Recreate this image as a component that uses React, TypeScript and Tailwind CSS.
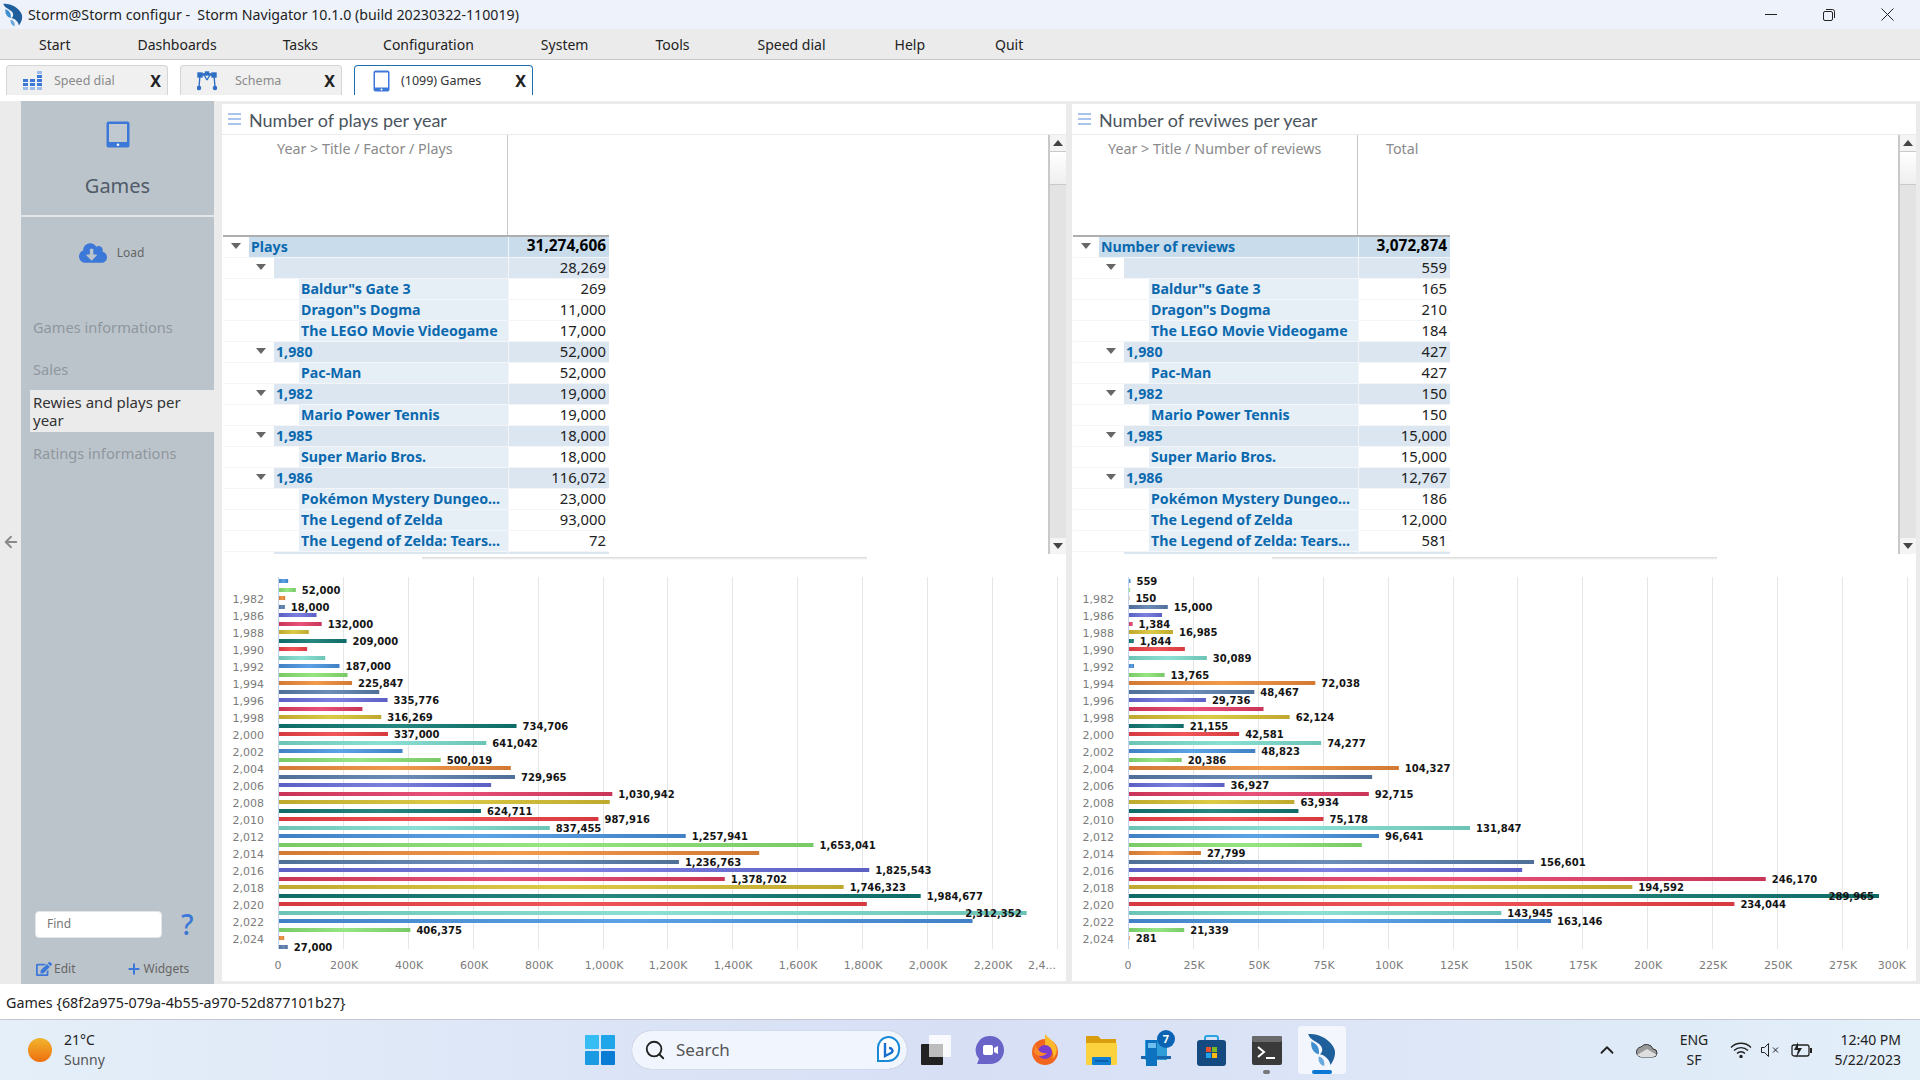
import { ArrowLeft, ChevronUp, Plus, Search } from 'lucide-react';
import { FaCloudDownloadAlt, FaEdit } from 'react-icons/fa';

type Row = { level: 0 | 1 | 2; name: string; value: string };

const playsRows: Row[] = [
  { level: 0, name: 'Plays', value: '31,274,606' },
  { level: 1, name: '', value: '28,269' },
  { level: 2, name: 'Baldur"s Gate 3', value: '269' },
  { level: 2, name: 'Dragon"s Dogma', value: '11,000' },
  { level: 2, name: 'The LEGO Movie Videogame', value: '17,000' },
  { level: 1, name: '1,980', value: '52,000' },
  { level: 2, name: 'Pac-Man', value: '52,000' },
  { level: 1, name: '1,982', value: '19,000' },
  { level: 2, name: 'Mario Power Tennis', value: '19,000' },
  { level: 1, name: '1,985', value: '18,000' },
  { level: 2, name: 'Super Mario Bros.', value: '18,000' },
  { level: 1, name: '1,986', value: '116,072' },
  { level: 2, name: 'Pokémon Mystery Dungeo...', value: '23,000' },
  { level: 2, name: 'The Legend of Zelda', value: '93,000' },
  { level: 2, name: 'The Legend of Zelda: Tears...', value: '72' },
  { level: 1, name: '', value: '' },
];

const reviewRows: Row[] = [
  { level: 0, name: 'Number of reviews', value: '3,072,874' },
  { level: 1, name: '', value: '559' },
  { level: 2, name: 'Baldur"s Gate 3', value: '165' },
  { level: 2, name: 'Dragon"s Dogma', value: '210' },
  { level: 2, name: 'The LEGO Movie Videogame', value: '184' },
  { level: 1, name: '1,980', value: '427' },
  { level: 2, name: 'Pac-Man', value: '427' },
  { level: 1, name: '1,982', value: '150' },
  { level: 2, name: 'Mario Power Tennis', value: '150' },
  { level: 1, name: '1,985', value: '15,000' },
  { level: 2, name: 'Super Mario Bros.', value: '15,000' },
  { level: 1, name: '1,986', value: '12,767' },
  { level: 2, name: 'Pokémon Mystery Dungeo...', value: '186' },
  { level: 2, name: 'The Legend of Zelda', value: '12,000' },
  { level: 2, name: 'The Legend of Zelda: Tears...', value: '581' },
  { level: 1, name: '', value: '' },
];

// [value, show label]
const playsBars: [number, boolean][] = [
  [28269, false], [52000, true], [19000, false], [18000, true], [116072, false], [132000, true], [92000, false], [209000, true], [87000, false], [143000, false],
  [187000, true], [212000, false], [225847, true], [310000, false], [335776, true], [258000, false], [316269, true], [734706, true], [337000, true], [641042, true],
  [382000, false], [500019, true], [717000, false], [729965, true], [656000, false], [1030942, true], [1023000, false], [624711, true], [987916, true], [837455, true],
  [1257941, true], [1653041, true], [1485000, false], [1236763, true], [1825543, true], [1378702, true], [1746323, true], [1984677, true], [1818000, false], [2312352, true],
  [2145000, false], [406375, true], [16000, false], [27000, true],
];

const reviewBars: [number, boolean][] = [
  [559, true], [427, false], [150, true], [15000, true], [12767, false], [1384, true], [16985, true], [1844, true], [21600, false], [30089, true],
  [1930, false], [13765, true], [72038, true], [48467, true], [29736, true], [52000, false], [62124, true], [21155, true], [42581, true], [74277, true],
  [48823, true], [20386, true], [104327, true], [94000, false], [36927, true], [92715, true], [63934, true], [65500, false], [75178, true], [131847, true],
  [96641, true], [90000, false], [27799, true], [156601, true], [152000, false], [246170, true], [194592, true], [289965, true], [234044, true], [143945, true],
  [163146, true], [21339, true], [281, true], [0, false],
];

const barColors = [
  ['#4180c4', '#5ba3e6'],
  ['#78c968', '#95e585'],
  ['#d27a34', '#f09a4c'],
  ['#4f6f98', '#6a8db8'],
  ['#5c60c4', '#7b80e0'],
  ['#c93558', '#e8527a'],
  ['#bfa92e', '#ddca46'],
  ['#0f6b66', '#26877f'],
  ['#d63a40', '#f05558'],
  ['#6cc4b6', '#8ae0d4'],
];

const yearLabels = ['1,982', '1,986', '1,988', '1,990', '1,992', '1,994', '1,996', '1,998', '2,000', '2,002', '2,004', '2,006', '2,008', '2,010', '2,012', '2,014', '2,016', '2,018', '2,020', '2,022', '2,024'];

const playTicks = ['0', '200K', '400K', '600K', '800K', '1,000K', '1,200K', '1,400K', '1,600K', '1,800K', '2,000K', '2,200K', '2,4...'];
const reviewTicks = ['0', '25K', '50K', '75K', '100K', '125K', '150K', '175K', '200K', '225K', '250K', '275K', '300K'];

function BarChart({ id, bars, max, ticks }: { id: string; bars: [number, boolean][]; max: number; ticks: string[] }) {
  const originX = 56;
  const step = 64.9;
  const plotW = 776;
  return (
    <svg width="844" height="421" className="block font-['DejaVu_Sans',sans-serif]">
      <defs>
        {barColors.map((c, i) => (
          <linearGradient key={i} id={`${id}-${i}`} x1="0" x2="1" y1="0" y2="0">
            <stop offset="0" stopColor={c[0]} />
            <stop offset="0.5" stopColor={c[1]} />
            <stop offset="1" stopColor={c[0]} />
          </linearGradient>
        ))}
      </defs>
      {ticks.map((t, i) => {
        const x = Math.round(originX + step * i);
        return (
          <g key={t}>
            {i > 0 && <line x1={x + 0.5} x2={x + 0.5} y1="17" y2="389" stroke="#e6e6e6" />}
            <text
              x={i === 12 ? x - 1 : x + (i === 0 ? 0 : 1)}
              y="409"
              textAnchor={i === 12 ? 'end' : 'middle'}
              fontSize="11"
              fill="#7c7c7c"
            >
              {t}
            </text>
          </g>
        );
      })}
      <line x1={originX + 0.5} x2={originX + 0.5} y1="17" y2="389" stroke="#c5d3ea" />
      {yearLabels.map((y, i) => (
        <text key={y} x="42" y={43 + i * 17} textAnchor="end" fontSize="11" fill="#7c7c7c">
          {y}
        </text>
      ))}
      {bars.map(([value, showLabel], i) => {
        const w = (value / max) * plotW;
        const cy = Math.round(21 + i * 8.5);
        const inside = value === 2312352 || value === 289965;
        const labelX = inside ? originX + w - 4 : originX + w + 7;
        return (
          <g key={i}>
            <rect x={originX + 1} y={cy - 2} width={w} height="4" fill={`url(#${id}-${i % 10})`} />
            {showLabel && (
              <text
                x={labelX}
                y={cy + 4}
                textAnchor={inside ? 'end' : 'start'}
                fontSize="10"
                fontWeight="700"
                fill="#141414"
              >
                {value.toLocaleString('en-US')}
              </text>
            )}
          </g>
        );
      })}
    </svg>
  );
}

function TableRow({ row, valueW, offsets }: { row: Row; valueW: string; offsets: [number, number, number] }) {
  const indent = offsets[row.level];
  const nameBg = row.level === 0 ? 'bg-[#c9dcec]' : row.level === 1 ? 'bg-[#dbe6f1]' : 'bg-[#e6eef6]';
  const valueBg = row.level === 0 ? 'bg-[#c9dcec] text-[15.4px] font-bold text-black' : row.level === 1 ? 'bg-[#dbe6f1] text-[14.8px] text-[#222]' : 'bg-white text-[14.8px] text-[#222]';
  return (
    <div className="flex h-[21px] shrink-0 leading-[20px]">
      <div className="flex w-[285px] shrink-0 border-b border-[#f3f5f8] text-[14.2px]">
        <div className="relative shrink-0" style={{ width: indent }}>
          {row.level < 2 && (
            <span className="absolute right-[8px] top-[6px] h-0 w-0 border-x-[5px] border-t-[6px] border-x-transparent border-t-[#666]" />
          )}
        </div>
        <div className={`flex-1 truncate pl-[2px] font-bold text-[#0a69ae] ${nameBg}`}>{row.name}</div>
      </div>
      <div className={`${valueW} shrink-0 border-b border-l border-[#f3f5f8] pr-[3px] text-right leading-[18px] ${valueBg}`}>{row.value}</div>
    </div>
  );
}

function ScrollBar() {
  return (
    <div className="flex w-[18px] shrink-0 flex-col border-l-2 border-[#c9c9c9] bg-[#e3e3e3]">
      <div className="flex h-[17px] items-center justify-center border-b border-[#c9c9c9] bg-[#f4f4f4]">
        <span className="h-0 w-0 border-x-[5px] border-b-[6px] border-x-transparent border-b-[#444]" />
      </div>
      <div className="h-[33px] border-b border-[#c9c9c9] bg-gradient-to-b from-white to-[#efefef]" />
      <div className="flex-1" />
      <div className="flex h-[16px] items-center justify-center bg-[#f4f4f4]">
        <span className="h-0 w-0 border-x-[5px] border-t-[6px] border-x-transparent border-t-[#444]" />
      </div>
    </div>
  );
}

function Panel({
  title,
  header,
  total,
  rows,
  valueW,
  offsets,
  headerPad,
  children,
}: {
  title: string;
  header: string;
  total?: string;
  rows: Row[];
  valueW: string;
  offsets: [number, number, number];
  headerPad: string;
  children: React.ReactNode;
}) {
  return (
    <section className="flex w-[844px] shrink-0 flex-col bg-white">
      <div className="flex h-[31px] shrink-0 items-center gap-[8px] border-b border-[#ebebeb] pl-[6px] text-[#4a5560]">
        <div className="flex w-[13px] flex-col gap-[3px]">
          <span className="h-[2px] bg-[#a9c5ee]" />
          <span className="h-[2px] bg-[#a9c5ee]" />
          <span className="h-[2px] bg-[#a9c5ee]" />
        </div>
        <span className="pt-[2px] font-['Lato',sans-serif] text-[18px]">{title}</span>
      </div>
      <div className="flex h-[419px] shrink-0 overflow-hidden">
        <div className="flex-1 pl-[1px]">
          <div className="flex h-[100px]">
            <div className={`w-[285px] border-r border-[#c8c8c8] pt-[3px] text-[14.3px] text-[#8a8a8a] ${headerPad}`}>{header}</div>
            {total && <div className="pl-[28px] pt-[3px] text-[14.3px] text-[#8a8a8a]">{total}</div>}
          </div>
          <div className={`border-t-2 border-[#aeaeae] ${total ? 'w-[377px]' : 'w-[386px]'}`}>
            {rows.map((r, i) => (
              <TableRow key={i} row={r} valueW={valueW} offsets={offsets} />
            ))}
          </div>
        </div>
        <ScrollBar />
      </div>
      <div className="h-[6px] shrink-0 pt-[3px]">
        <div className="ml-[200px] h-[3px] w-[445px] bg-gradient-to-b from-[#d8d8d8] to-white" />
      </div>
      {children}
    </section>
  );
}

function StormLogo({ size }: { size: number }) {
  return (
    <svg width={size} height={size} viewBox="0 0 32 32">
      <path d="M3 1C12 0 25 6 28 16c1 5-1 10-4 14-1-5-5-9-10-10 3-2 3-6 0-9C11 8 5 7 3 1z" fill="#1f5f9c" />
      <path d="M6 8c5 2 8 6 7 12-5-1-8-6-7-12z" fill="#3f8fd0" />
      <path d="M13 22c4 1 6 5 5 9-4-1-6-5-5-9z" fill="#6aa9dc" />
    </svg>
  );
}

function TabIcon() {
  return (
    <svg width="17" height="22" viewBox="0 0 17 22">
      <rect x="0.5" y="0.5" width="16" height="21" rx="2" fill="#3c78d8" />
      <rect x="2" y="2.5" width="13" height="15" fill="#fff" />
      <circle cx="8.5" cy="19.6" r="1" fill="#fff" />
    </svg>
  );
}

export default function App() {
  return (
    <div className="flex h-screen w-[1920px] flex-col overflow-hidden bg-white font-['Noto_Sans',sans-serif] text-[#222]">
      {/* title bar */}
      <div className="flex h-[29px] shrink-0 items-center bg-[#eef3fb] pl-[1px] text-[14.2px]">
        <StormLogo size={24} />
        <span className="ml-[3px] whitespace-pre text-[#222]">Storm@Storm configur -  Storm Navigator 10.1.0 (build 20230322-110019)</span>
        <div className="ml-auto flex items-center gap-[46px] pr-[26px]">
          <span className="h-px w-[12px] bg-[#222]" />
          <svg width="12" height="12" viewBox="0 0 12 12" fill="none" stroke="#222">
            <rect x="0.5" y="2.5" width="9" height="9" rx="1.5" />
            <path d="M3 .5h6.5a2 2 0 0 1 2 2V9" />
          </svg>
          <svg width="13" height="13" viewBox="0 0 13 13" stroke="#222">
            <path d="M.5.5l12 12M12.5.5l-12 12" />
          </svg>
        </div>
      </div>

      {/* menu */}
      <div className="flex h-[31px] shrink-0 items-center border-b border-[#c8c8c8] bg-[#ebebeb] text-[14px]">
        <span className="ml-[39px]">Start</span>
        <span className="ml-[67px]">Dashboards</span>
        <span className="ml-[66px]">Tasks</span>
        <span className="ml-[65px]">Configuration</span>
        <span className="ml-[67px]">System</span>
        <span className="ml-[67px]">Tools</span>
        <span className="ml-[68px]">Speed dial</span>
        <span className="ml-[69px]">Help</span>
        <span className="ml-[70px]">Quit</span>
      </div>

      {/* tabs */}
      <div className="flex h-[41px] shrink-0 gap-[12px] pl-[6px] pt-[5px] text-[12.5px]">
        <div className="flex h-[30px] w-[162px] items-center rounded-t-[4px] border-x border-t border-[#d5d5d5] bg-[#f0f0f0] pl-[16px] pr-[6px] text-[#8a8a8a]">
          <svg width="20" height="20" viewBox="0 0 20 20" fill="#3c78d8">
            <rect x="0" y="8" width="5" height="3" />
            <rect x="7" y="8" width="5" height="3" />
            <rect x="14" y="4" width="5" height="3" />
            <rect x="14" y="8" width="5" height="3" />
            <rect x="0" y="12" width="5" height="3" />
            <rect x="7" y="12" width="5" height="3" />
            <rect x="14" y="12" width="5" height="3" />
            <rect x="0" y="16" width="5" height="3" fill="#9dbcec" />
            <rect x="7" y="16" width="5" height="3" fill="#9dbcec" />
            <rect x="14" y="16" width="5" height="3" fill="#9dbcec" />
            <rect x="14" y="0" width="5" height="3" fill="#9dbcec" />
          </svg>
          <span className="ml-[11px] pt-[2px]">Speed dial</span>
          <span className="ml-auto text-[16px] font-bold leading-none text-[#222]">X</span>
        </div>
        <div className="flex h-[30px] w-[162px] items-center rounded-t-[4px] border-x border-t border-[#d5d5d5] bg-[#f0f0f0] pl-[16px] pr-[6px] text-[#8a8a8a]">
          <svg width="20" height="20" viewBox="0 0 20 20" fill="none" stroke="#2f6fc4" strokeWidth="1.4">
            <path d="M3 4C5 2 15 2 17 4M3 4l-1 12M17 4l1 12M8 4l-5 0M12 4h5M7 4l3 5M13 4l-3 5" />
            <rect x="1" y="2" width="4" height="4" fill="#2f6fc4" />
            <rect x="15" y="2" width="4" height="4" fill="#2f6fc4" />
            <rect x="8.5" y="1" width="3" height="3" fill="#2f6fc4" />
            <circle cx="2" cy="17" r="1.6" fill="#2f6fc4" />
            <circle cx="18" cy="17" r="1.6" fill="#2f6fc4" />
          </svg>
          <span className="ml-[18px] pt-[2px]">Schema</span>
          <span className="ml-auto text-[16px] font-bold leading-none text-[#222]">X</span>
        </div>
        <div className="flex h-[30px] w-[179px] items-center rounded-t-[4px] border-x border-t border-[#1f6fb0] bg-white pl-[18px] pr-[6px] text-[#333]">
          <TabIcon />
          <span className="ml-[11px] pt-[2px]">(1099) Games</span>
          <span className="ml-auto text-[16px] font-bold leading-none text-[#222]">X</span>
        </div>
      </div>

      {/* main */}
      <div className="flex h-[883px] shrink-0 bg-[#ebebeb]">
        <div className="flex w-[21px] shrink-0 items-center justify-center">
          <ArrowLeft size={18} className="mt-[-2px] text-[#8a8a8a]" strokeWidth={2.5} />
        </div>

        <aside className="flex w-[193px] shrink-0 flex-col bg-[#bcc4cb] text-[14.6px] text-[#8f979e]">
          <div className="flex h-[116px] flex-col items-center border-b-2 border-[#e3e5e7] pt-[20px]">
            <svg width="24" height="27" viewBox="0 0 24 27">
              <rect x="0.5" y="0.5" width="23" height="26" rx="2" fill="#3c78d8" />
              <rect x="3" y="3" width="18" height="18" fill="#c1c9d0" />
              <circle cx="12" cy="23.7" r="1.3" fill="#fff" />
            </svg>
            <span className="mt-[25px] text-[20px] leading-[26px] text-[#4f5b68]">Games</span>
          </div>
          <div className="mt-[22px] flex items-center justify-center pr-[12px]">
            <FaCloudDownloadAlt size={28} className="text-[#3c78d8]" />
            <span className="ml-[10px] text-[12px] text-[#666]">Load</span>
          </div>
          <div className="mt-[50px] pl-[12px] leading-[20px]">Games informations</div>
          <div className="mt-[22px] pl-[12px] leading-[20px]">Sales</div>
          <div className="ml-[9px] mt-[11px] h-[42px] bg-[#ebebeb] pl-[3px] pt-[3px] text-[15px] leading-[18px] text-[#333]">
            Rewies and plays per
            <br />
            year
          </div>
          <div className="mt-[11px] pl-[12px] leading-[20px]">Ratings informations</div>
          <div className="mt-auto flex items-center pl-[14px]">
            <div className="flex h-[27px] w-[127px] items-center rounded-[4px] border border-[#e3e5e7] bg-white pl-[11px] text-[12px] text-[#777]">Find</div>
            <span className="ml-[19px] text-[28px] font-medium leading-none text-[#3c78d8]">?</span>
          </div>
          <div className="mb-[5px] mt-[21px] flex h-[20px] items-center pl-[15px] text-[12px] text-[#666]">
            <FaEdit size={16} className="text-[#3c78d8]" />
            <span className="ml-[2px]">Edit</span>
            <Plus size={16} strokeWidth={3} className="ml-[51px] text-[#3c78d8]" />
            <span className="ml-[1px]">Widgets</span>
          </div>
        </aside>

        <div className="flex flex-1 gap-[6px] pl-[8px] pt-[3px]">
          <div className="h-[877px]">
            <Panel title="Number of plays per year" header="Year > Title / Factor / Plays" headerPad="pl-[54px]" rows={playsRows} valueW="w-[101px]" offsets={[26, 51, 76]}>
              <BarChart id="plays" bars={playsBars} max={2400000} ticks={playTicks} />
            </Panel>
          </div>
          <div className="h-[877px]">
            <Panel title="Number of reviwes per year" header="Year > Title / Number of reviews" headerPad="pl-[35px]" total="Total" rows={reviewRows} valueW="w-[92px]" offsets={[26, 51, 76]}>
              <BarChart id="reviews" bars={reviewBars} max={300000} ticks={reviewTicks} />
            </Panel>
          </div>
        </div>
      </div>

      {/* status */}
      <div className="flex h-[36px] shrink-0 items-center border-b border-[#c3c8d0] pl-[6px] pt-[2px] text-[14.3px]">
        Games {'{'}68f2a975-079a-4b55-a970-52d877101b27{'}'}
      </div>

      {/* taskbar */}
      <div className="flex h-[60px] shrink-0 items-center bg-gradient-to-r from-[#e4eff9] via-[#d7dff5] to-[#e3eff9] text-[14px]">
        <span className="ml-[28px] h-[24px] w-[24px] rounded-full bg-gradient-to-b from-[#efb52e] to-[#ee6d0c]" />
        <div className="ml-[12px] w-[60px] text-[14px] leading-[20px]">
          <div>21°C</div>
          <div className="text-[#555]">Sunny</div>
        </div>
        <svg className="ml-[461px]" width="30" height="30" viewBox="0 0 30 30">
          <rect x="0" y="0" width="14" height="14" rx="1" fill="#36bdf4" />
          <rect x="16" y="0" width="14" height="14" rx="1" fill="#1ea5ea" />
          <rect x="0" y="16" width="14" height="14" rx="1" fill="#1a9ae3" />
          <rect x="16" y="16" width="14" height="14" rx="1" fill="#0a7cd6" />
        </svg>
        <div className="ml-[17px] flex h-[38px] w-[275px] items-center rounded-full bg-[#f1f6fe] pl-[12px] shadow-[0_0_1px_#99a]">
          <Search size={22} className="text-[#222]" />
          <span className="ml-[10px] text-[17px] text-[#555]">Search</span>
          <svg className="ml-auto mr-[6px]" width="26" height="30" viewBox="0 0 26 30" fill="none">
            <path d="M13 2a11 11 0 0 1 11 13c0 6-5 11-11 11H3V14A11 11 0 0 1 13 2z" stroke="#1a8ad8" strokeWidth="2" fill="#fff" />
            <path d="M10 8v13l6-3c3-2 1-5-2-5" stroke="#1a6fd0" strokeWidth="2.4" />
          </svg>
        </div>
        <svg className="ml-[14px]" width="30" height="30" viewBox="0 0 30 30">
          <rect x="0" y="9" width="22" height="21" rx="1" fill="#222" />
          <rect x="8" y="0" width="22" height="22" rx="1" fill="#fff" fillOpacity="0.85" />
          <rect x="8" y="9" width="14" height="13" fill="#bdbdbd" />
        </svg>
        <svg className="ml-[24px]" width="30" height="30" viewBox="0 0 30 30">
          <path d="M15 1c8 0 14 6 14 14s-6 14-14 14H2l2-5A14 14 0 0 1 15 1z" fill="#6a63c8" />
          <rect x="8" y="10" width="10" height="10" rx="2" fill="#fff" />
          <path d="M19 13l4-2v8l-4-2z" fill="#fff" />
        </svg>
        <svg className="ml-[25px]" width="30" height="32" viewBox="0 0 30 32">
          <circle cx="15" cy="18" r="13" fill="#f2651f" />
          <path d="M15 0c3 4 8 6 11 12 2 5 0 10-4 13 3-5 0-12-7-13z" fill="#fcb72a" />
          <circle cx="15" cy="18" r="7" fill="#7a3ccc" />
          <path d="M5 10c2 6 6 10 12 9-3 4-10 4-13-1z" fill="#f98a2a" />
        </svg>
        <svg className="ml-[26px]" width="31" height="30" viewBox="0 0 31 30">
          <path d="M0 2a1 1 0 0 1 1-1h11l3 3h15v6H0z" fill="#d99e0e" />
          <rect x="0" y="8" width="31" height="22" rx="1" fill="#fcd33f" />
          <rect x="6" y="22" width="19" height="8" rx="1" fill="#0f7fd4" />
          <rect x="9" y="25" width="13" height="2" fill="#0a5fa6" />
        </svg>
        <div className="relative ml-[24px] h-[32px] w-[30px]">
          <svg width="30" height="32" viewBox="0 0 30 32">
            <rect x="4" y="6" width="22" height="20" fill="#2f9ed8" />
            <rect x="0" y="22" width="30" height="3" fill="#1766ae" />
            <rect x="5" y="6" width="11" height="26" fill="#0d72c0" />
            <rect x="7" y="9" width="8" height="5" fill="#6dc0ee" />
          </svg>
          <span className="absolute -right-[4px] -top-[4px] flex h-[18px] w-[18px] items-center justify-center rounded-full bg-[#0a63b3] text-[11px] font-bold text-white">7</span>
        </div>
        <svg className="ml-[26px]" width="29" height="31" viewBox="0 0 29 31">
          <path d="M8 6V3a2 2 0 0 1 2-2h9a2 2 0 0 1 2 2v3" fill="none" stroke="#2aa4e0" strokeWidth="2" />
          <rect x="0" y="5" width="29" height="26" rx="3" fill="#144a80" />
          <rect x="9" y="12" width="5" height="5" fill="#e8532e" />
          <rect x="15" y="12" width="5" height="5" fill="#7fba21" />
          <rect x="9" y="18" width="5" height="5" fill="#1fa5ea" />
          <rect x="15" y="18" width="5" height="5" fill="#fdb812" />
        </svg>
        <div className="relative ml-[26px] h-[29px] w-[30px]">
          <svg width="30" height="29" viewBox="0 0 30 29">
            <rect width="30" height="29" rx="2" fill="#3a3a3a" />
            <rect width="30" height="6" rx="2" fill="#6a6a6a" />
            <path d="M6 11l6 5-6 5" fill="none" stroke="#fff" strokeWidth="2" />
            <path d="M14 22h9" stroke="#fff" strokeWidth="2" />
          </svg>
          <span className="absolute -bottom-[9px] left-[11px] h-[4px] w-[7px] rounded-full bg-[#777]" />
        </div>
        <div className="relative ml-[16px] flex h-[48px] w-[48px] items-center justify-center rounded-[4px] bg-[#f3f6fc]">
          <StormLogo size={34} />
          <span className="absolute bottom-[0px] left-[14px] h-[4px] w-[20px] rounded-full bg-[#0a78d4]" />
        </div>
        <ChevronUp size={22} className="ml-[250px] text-[#222]" />
        <svg className="ml-[18px]" width="22" height="16" viewBox="0 0 22 16">
          <path d="M6 15a5 5 0 0 1-1-10 7 7 0 0 1 12 2 4 4 0 0 1 0 8z" fill="#9a9a9a" stroke="#333" />
          <path d="M1 13l10-6 10 6-4 2H5z" fill="#dedede" />
        </svg>
        <div className="ml-[16px] w-[40px] text-center text-[14px] leading-[20px]">
          <div>ENG</div>
          <div>SF</div>
        </div>
        <svg className="ml-[16px]" width="22" height="16" viewBox="0 0 22 16" fill="none" stroke="#222" strokeWidth="1.4">
          <path d="M1 5.5a14 14 0 0 1 20 0M4 8.5a10 10 0 0 1 14 0M7 11.5a5.5 5.5 0 0 1 8 0" />
          <circle cx="11" cy="14.5" r="1" fill="#222" />
        </svg>
        <svg className="ml-[8px]" width="20" height="16" viewBox="0 0 20 16" fill="none" stroke="#222">
          <path d="M1.5 5.5h3l4-4v13l-4-4h-3z" />
          <path d="M13 5.5l5 5M18 5.5l-5 5" />
        </svg>
        <svg className="ml-[11px]" width="22" height="18" viewBox="0 0 22 18">
          <rect x="1" y="4" width="17" height="11" rx="2" fill="none" stroke="#222" strokeWidth="1.3" />
          <rect x="19" y="7" width="2" height="5" fill="#222" />
          <path d="M7 1L3 9h4l-2 8 6-10H7z" fill="#222" />
        </svg>
        <div className="ml-[5px] w-[83px] text-right text-[14px] leading-[20px]">
          <div>12:40 PM</div>
          <div>5/22/2023</div>
        </div>
      </div>
    </div>
  );
}
